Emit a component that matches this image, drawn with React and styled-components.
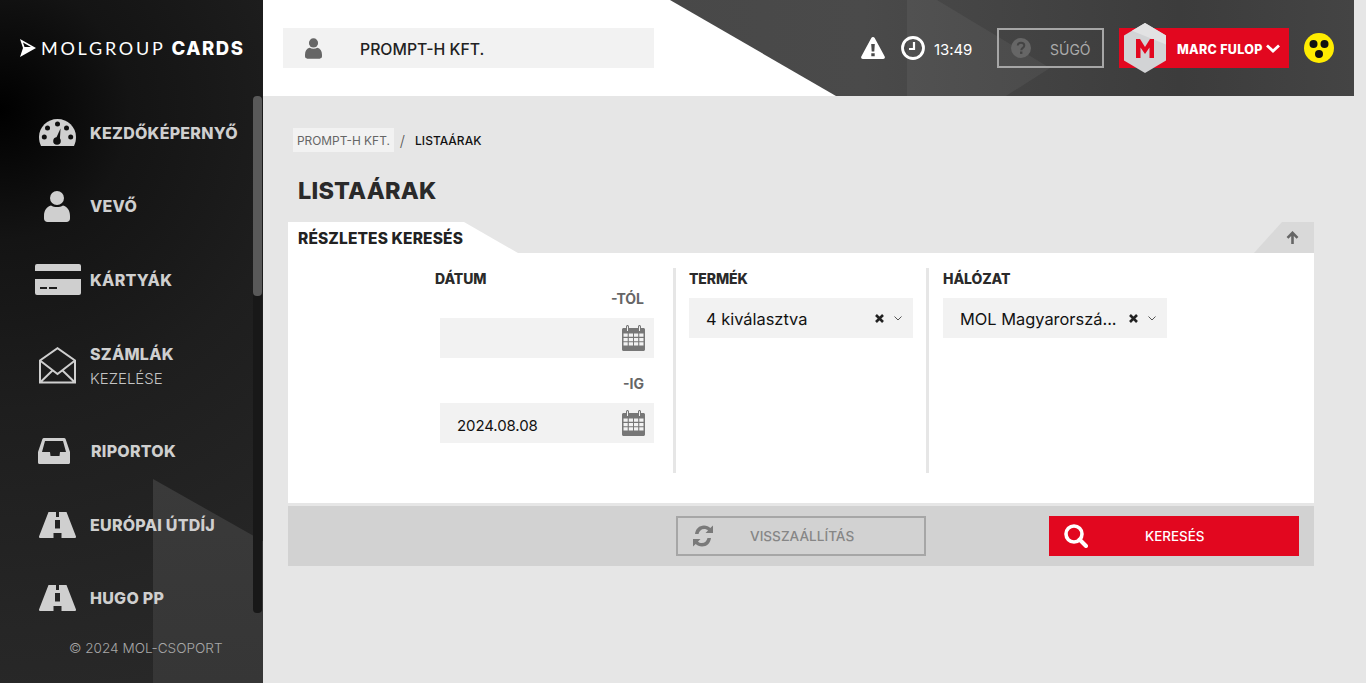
import React from 'react';
import styled, { createGlobalStyle } from 'styled-components';

const Global = createGlobalStyle`
  html, body { margin: 0; padding: 0; height: 100%; overflow: hidden; }
  body { font-family: "Inter", "Liberation Sans", sans-serif; background: #e6e6e6; }
  * { box-sizing: border-box; }
`;
const RED = '#e2071f';

const Page = styled.div`display: flex; width: 1366px; height: 683px; background: #e6e6e6;`;
const Sidebar = styled.aside`
  position: relative; width: 263px; height: 683px; flex: none; overflow: hidden;
  display: flex; flex-direction: column;
  background: radial-gradient(circle at 0 110px, #000 0, #141414 130px, #1e1e1e 300px, #262626 520px, #2b2b2b 700px);
  &::after {
    content: ''; position: absolute; left: 153px; top: 479px; width: 110px; height: 204px;
    background: linear-gradient(180deg, #3a3a3a, #363636);
    clip-path: polygon(0 0, 100% 30.5%, 100% 100%, 0 100%);
  }
`;
const Logo = styled.div`
  position: relative; z-index: 1; height: 96px; flex: none; padding-left: 20px;
  display: flex; align-items: center; color: #fff; gap: 5px;
  svg { flex: none; }
`;
const LogoText = styled.div`
  font-size: 18px; letter-spacing: 2.75px; font-weight: 400; white-space: nowrap; font-family: "Lato", sans-serif;
  b { font-weight: 800; margin-left: -1px; font-family: "Inter", sans-serif; font-size: 18.5px; letter-spacing: 1.6px; }
`;
const Track = styled.div`
  position: absolute; z-index: 2; left: 253px; top: 96px; width: 9px; height: 517px;
  background: #181818; border-radius: 0 0 4px 4px;
`;
const Thumb = styled.div`width: 9px; height: 200px; background: #595959; border-radius: 4px;`;
const Nav = styled.nav`position: relative; z-index: 1; display: flex; flex-direction: column;`;
const NavRow = styled.div`
  display: flex; align-items: center; height: ${p => p.$h || 73.5}px; color: #cfcfcf;
`;
const NavIcon = styled.div`width: 90px; flex: none; display: flex; justify-content: center; padding-left: ${p => p.$pl ?? 24}px;`;
const NavText = styled.div`
  font-size: 16px; font-weight: 800; letter-spacing: .25px; white-space: nowrap;
  padding-left: ${p => p.$pl || 0}px;
  small { display: block; font-weight: 300; font-size: 15px; letter-spacing: 0; margin-top: 5px; color: #c4c4c4; }
`;
const Copyright = styled.div`
  position: relative; z-index: 1; margin-top: 5px; padding-left: 69px; font-size: 13.6px; font-weight: 300; color: #a8a8a8; white-space: nowrap;
`;

const Main = styled.main`flex: 1; min-width: 0; display: flex; flex-direction: column;`;
const Header = styled.header`
  position: relative; height: 96px; flex: none; display: flex; align-items: center;
  background: linear-gradient(90deg, #fff 1091px, #e6e6e6 1091px); padding: 0 32px 0 20px;
`;
const HeaderDark = styled.div`
  position: absolute; inset: 0 12px 0 0;
  background: linear-gradient(90deg, #444 0%, #4a4a4a 55%, #3c3c3c 84%, #444 100%);
  clip-path: polygon(407px 0, 100% 0, 100% 100%, 573px 100%);
  &::after {
    content: ''; position: absolute; left: 644px; top: 0; width: 160px; height: 96px;
    background: rgba(255,255,255,.05);
    clip-path: polygon(0 0, 30px 0, 143px 68px, 99px 96px, 0 96px);
  }
`;
const Company = styled.div`
  position: relative; width: 371px; height: 40px; background: #f2f2f2; display: flex; align-items: center;
  padding-left: 22px; font-size: 15.8px; font-weight: 500; color: #222;
  span { margin-left: 38px; padding-top: 2px; }
`;
const HeaderRight = styled.div`position: relative; margin-left: auto; display: flex; align-items: center;`;
const Spacer = styled.div`width: ${p => p.$w || 0}px; height: ${p => p.$h || 0}px; flex: none;`;
const WarnSlot = styled.div`margin-left: 1px; margin-right: 16px; display: flex;`;
const Time = styled.div`color: #fff; font-size: 15px; font-weight: 400; margin-left: 9px; width: 38px; letter-spacing: -.1px; padding-top: 2px;`;
const Help = styled.div`
  width: 107px; height: 40px; border: 2px solid #a6a6a6; margin-left: 25px; display: flex; align-items: center;
  padding-left: 12px; color: #ababab; font-size: 14px; font-weight: 400;
  span { margin-left: 19px; padding-top: 2px; }
`;
const UserBox = styled.div`
  position: relative; width: 170px; height: 40px; background: ${RED}; margin-left: 15px; display: flex; align-items: center;
  padding-left: 58px; color: #fff; font-size: 12.5px; font-weight: 800; letter-spacing: .3px; white-space: nowrap;
  gap: 3px;
  span { padding-top: 2px; }
`;
const Hexa = styled.svg`position: absolute; left: 5px; top: -5px;`;
const Blind = styled.svg`margin-left: 15px; display: block;`;

const Content = styled.div`flex: 1; padding: 32px 52px 0 25px;`;
const Crumbs = styled.div`display: flex; align-items: center; height: 24px; margin-left: 5px; font-size: 12px; font-weight: 500;`;
const CrumbLink = styled.div`background: #f2f2f2; height: 24px; padding: 0 4px; display: flex; align-items: center; color: #666; font-size: 11.9px; font-weight: 400;`;
const CrumbSep = styled.span`color: #555; margin: 0 10px 0 6px; font-size: 15px; font-weight: 300;`;
const CrumbNow = styled.span`color: #111;`;
const Title = styled.h1`margin: 23px 0 16px 10px; height: 31px; line-height: 31px; font-size: 23.5px; font-weight: 800; color: #2a2a2a; letter-spacing: .2px;`;

const TabBar = styled.div`display: flex; justify-content: space-between; height: 31px;`;
const Tab = styled.div`
  width: 230px; height: 31px; background: #fff; clip-path: polygon(0 0, 176px 0, 100% 100%, 0 100%);
  padding: 7px 0 0 10px; font-size: 15.5px; line-height: 20px; font-weight: 800; color: #222; letter-spacing: .13px; white-space: nowrap;
`;
const Collapse = styled.div`
  width: 60px; height: 31px; background: #d9d9d9; clip-path: polygon(28px 0, 100% 0, 100% 100%, 0 100%);
  display: flex; align-items: center; justify-content: flex-end; padding-right: 15px; color: #666;
`;
const Body = styled.div`height: 250px; background: #fff; display: flex; padding: 15px 0 0 131px; align-items: flex-start;`;
const Column = styled.div`
  width: ${p => p.$w}px; height: 205px; flex: none;
  padding-left: ${p => p.$pl}px;
  border-left: ${p => p.$line ? '3px solid #e6e6e6' : 'none'};
`;
const FieldLabel = styled.div`height: 22px; line-height: 22px; font-size: 14px; font-weight: 800; color: #2a2a2a; letter-spacing: -.1px;`;
const SubLabel = styled.div`
  width: 209px; margin-top: -1px; text-align: right; font-size: 14px; line-height: 20px; font-weight: 700; color: #666; height: 20px;
`;
const DateInput = styled.div`
  width: 214px; height: 40px; margin-left: 5px; background: #f2f2f2; display: flex; align-items: center; justify-content: space-between;
  padding: 0 9px 0 17px; font-size: 15px; font-weight: 400; color: #111; letter-spacing: -.1px;
  span { padding-top: 4px; }
`;
const Select = styled.div`
  width: 224px; height: 40px; margin-top: 8px; background: #f2f2f2; display: flex; align-items: center;
  padding: 0 11px 0 17px; font-size: 16.4px; font-weight: 400; color: #111; white-space: nowrap;
  span { flex: 1; padding-top: 2px; }
  svg + svg { margin-left: 10px; }
`;
const Stripe = styled.div`height: 3px;`;
const Actions = styled.div`
  height: 60px; background: #d2d2d2; display: flex; align-items: center; padding-left: 388px;
`;
const Reset = styled.div`
  width: 250px; height: 40px; border: 2px solid #a6a6a6; display: flex; align-items: center; padding-left: 14px; color: #868686;
  font-size: 13.6px; font-weight: 500;
  span { margin-left: 36px; }
`;
const Search = styled.div`
  width: 250px; height: 40px; margin-left: 123px; background: ${RED}; display: flex; align-items: center; padding-left: 15px; color: #fff;
  font-size: 13.4px; font-weight: 500;
  span { margin-left: 57px; }
`;

const Gauge = () => (
  <svg width="37" height="27" viewBox="0 0 37 27">
    <path fill="#cfcfcf" d="M18.500 0C8.300 0 0 8 0 18c0 3.200.7 6.200 2 9h33c1.300-2.800 2-5.800 2-9C37 8 28.700 0 18.500 0Z"/>
    <g fill="#0f0f0f">
      <circle cx="18.500" cy="5" r="2.500"/><circle cx="8.500" cy="9" r="2.500"/><circle cx="27.500" cy="9" r="2.500"/>
      <circle cx="5.300" cy="18" r="2.500"/><circle cx="31.700" cy="18" r="2.500"/>
      <circle cx="18" cy="22" r="3.800"/><path d="M21.500 9.500 20.800 22h-5Z"/>
    </g>
  </svg>
);
const UserIcon = ({ w = 26, h = 31, c = '#cfcfcf' }) => (
  <svg width={w} height={h} viewBox="0 0 26 31"><circle cx="13" cy="7" r="7" fill={c}/><path fill={c} d="M0 25c0-6 3-9.500 7-10.500 3.500 2 8.500 2 12 0 4 1 7 4.500 7 10.500v2.500c0 2-1.500 3.500-3.500 3.500h-19C1.500 31 0 29.500 0 27.500Z"/></svg>
);
const Card = () => (
  <svg width="46" height="31" viewBox="0 0 46 31"><path fill="#cfcfcf" d="M2 0h42a2 2 0 0 1 2 2v5H0V2a2 2 0 0 1 2-2ZM0 15h46v14a2 2 0 0 1-2 2H2a2 2 0 0 1-2-2Z"/><path fill="#1d1d1d" d="M5 23h7v2H5zM14 23h8v2h-8z"/></svg>
);
const Envelope = () => (
  <svg width="37" height="37" viewBox="0 0 37 37" fill="none" stroke="#cfcfcf" strokeWidth="2"><path d="M1 35.500V13.500L18.500 1.200 36 13.500v22ZM1 35.500 14 23M36 35.500 23 23M1 13.500 18.500 27 36 13.500"/></svg>
);
const Inbox = () => (
  <svg width="32" height="26" viewBox="0 0 32 26"><path fill="#cfcfcf" fillRule="evenodd" d="M6 0h20c.8 0 1.300.4 1.600 1L32 14v10.500c0 .9-.6 1.500-1.500 1.500h-29C.6 26 0 25.400 0 24.500V14L4.400 1C4.700.4 5.200 0 6 0ZM7 3 4 14h8l.5 4h9l.5-4h6L25 3Z"/></svg>
);
const Road = () => (
  <svg width="37" height="26" viewBox="0 0 37 26"><path fill="#cfcfcf" fillRule="evenodd" d="M9.500 0H17v5h3V0h7.500l9.500 24.500c.2.900-.3 1.500-1 1.500H22.500v-5h-8v5H1c-.7 0-1.200-.6-1-1.500ZM16 8h5v8.500h-5Z"/></svg>
);
const Warn = () => (
  <svg width="24" height="22" viewBox="0 0 24 22"><path fill="#fff" fillRule="evenodd" d="M12 0c.8 0 1.300.4 1.700 1l10 18.500c.6 1.200-.2 2.500-1.500 2.500H1.800C.5 22-.3 20.700.3 19.500L10.300 1c.4-.6.9-1 1.700-1ZM10.200 7l.5 7.500h2.600l.5-7.500ZM10.300 16.200v3h3.400v-3Z"/></svg>
);
const Clock = () => (
  <svg width="24" height="24" viewBox="0 0 24 24" fill="none" stroke="#fff"><circle cx="12" cy="12" r="10.500" strokeWidth="2.800"/><path d="M13 6v7H8" strokeWidth="2.200"/></svg>
);
const Question = () => (
  <svg width="20" height="20" viewBox="0 0 20 20"><circle cx="10" cy="10" r="10" fill="#666"/><path d="M6.700 7.500c.2-1.800 1.600-2.700 3.300-2.700 1.900 0 3.300 1 3.300 2.700 0 2.500-3 2.300-3 4.700" fill="none" stroke="#444" strokeWidth="2"/><rect x="9" y="13.500" width="2.400" height="2.400" fill="#444"/></svg>
);
const Calendar = () => (
  <svg width="23" height="26" viewBox="0 0 23 26"><path fill="#777" fillRule="evenodd" d="M1.500 3H4V1.500C4 .5 5 0 5.500 0S7 .5 7 1.500V3h9V1.500C16 .5 17 0 17.500 0S19 .5 19 1.500V3h2.500c.8 0 1.500.7 1.500 1.500v20c0 .8-.7 1.500-1.500 1.500h-20C.7 26 0 25.300 0 24.500v-20C0 3.700.7 3 1.500 3ZM5 1.300V6h1V1.300ZM17 1.300V6h1V1.300Z"/><path fill="#f2f2f2" d="M1.500 8.500h4.200v3.300H1.500zM6.800 8.500h4.200v3.300H6.800zM12 8.500h4.200v3.300H12zM17.300 8.500h4.200v3.300h-4.200zM1.500 12.900h4.200v3.300H1.500zM6.800 12.900h4.200v3.300H6.800zM12 12.900h4.200v3.300H12zM17.300 12.900h4.200v3.300h-4.200zM1.500 17.300h4.200v3.300H1.500zM6.800 17.300h4.200v3.300H6.800zM12 17.300h4.200v3.300H12zM17.300 17.300h4.200v3.300h-4.200z"/></svg>
);
const Times = () => (
  <svg width="9" height="9" viewBox="0 0 9 9" stroke="#222" strokeWidth="2.600"><path d="M1 1l7 7M8 1 1 8"/></svg>
);
const Chevron = () => (
  <svg width="8" height="5" viewBox="0 0 8 5" fill="none" stroke="#555" strokeWidth="1"><path d="M.5.500 4 4 7.500.500"/></svg>
);
const Up = () => (
  <svg width="13" height="13" viewBox="0 0 13 13" fill="none" stroke="#666" strokeWidth="2.600"><path d="M1.500 6.800 6.500 1.800l5 5M6.500 2v11"/></svg>
);
const Refresh = () => (
  <svg width="22" height="24" viewBox="0 0 22 24"><path fill="#7a7a7a" d="M3 10C3.700 5 7 1.500 12 1.500c2.700 0 4.800 1 6.300 2.500L21 1.500V9h-7.500l2.500-2.500c-1-1-2.300-1.500-3.800-1.500-3 0-5 2-5.700 5ZM19 14c-.7 5-4 8.500-9 8.500-2.700 0-4.800-1-6.300-2.500L1 22.500V15h7.500L6 17.500C7 18.500 8.300 19 9.800 19c3 0 5-2 5.700-5Z"/></svg>
);
const Magnify = () => (
  <svg width="24" height="24" viewBox="0 0 24 24" fill="none" stroke="#fff"><circle cx="10" cy="10" r="8" strokeWidth="3.600"/><path d="M15.500 15.500 22 22" strokeWidth="4" strokeLinecap="round"/></svg>
);
const LogoMark = () => (
  <svg width="16" height="18" viewBox="0 0 16 18"><path fill="#fff" fillRule="evenodd" d="M0 0l16 9L0 18l3-9ZM3 3.500 4.500 8H11Z"/></svg>
);

export default function App() {
  return (
    <Page>
      <Global />
      <Sidebar>
        <Logo><LogoMark /><LogoText>MOLGROUP <b>CARDS</b></LogoText></Logo>
        <Track><Thumb /></Track>
        <Nav>
          <NavRow><NavIcon><Gauge /></NavIcon><NavText>KEZDŐKÉPERNYŐ</NavText></NavRow>
          <NavRow><NavIcon><UserIcon /></NavIcon><NavText>VEVŐ</NavText></NavRow>
          <NavRow><NavIcon $pl={26}><Card /></NavIcon><NavText>KÁRTYÁK</NavText></NavRow>
          <NavRow $h={98}><NavIcon><Envelope /></NavIcon><NavText>SZÁMLÁK<small>KEZELÉSE</small></NavText></NavRow>
          <NavRow><NavIcon $pl={18}><Inbox /></NavIcon><NavText $pl={1}>RIPORTOK</NavText></NavRow>
          <NavRow><NavIcon><Road /></NavIcon><NavText>EURÓPAI ÚTDÍJ</NavText></NavRow>
          <NavRow><NavIcon><Road /></NavIcon><NavText>HUGO PP</NavText></NavRow>
        </Nav>
        <Copyright>© 2024 MOL-CSOPORT</Copyright>
      </Sidebar>
      <Main>
        <Header>
          <HeaderDark />
          <Company><UserIcon w={17} h={21} c="#666" /><span>PROMPT-H KFT.</span></Company>
          <HeaderRight>
            <WarnSlot><Warn /></WarnSlot>
            <Clock />
            <Time>13:49</Time>
            <Help><Question /><span>SÚGÓ</span></Help>
            <UserBox>
              <Hexa width="42" height="50" viewBox="0 0 42 50">
                <path fill="#d2d3d5" d="M21 0l21 12.500v25L21 50 0 37.500v-25Z"/>
                <path fill="#e2e2e3" d="M21 0l21 12.500v9L8 7.700Z"/>
                <path fill={RED} d="M12 35V16h4l5 8 5-8h4v19h-4.500V24.500L21 31l-4.500-6.500V35Z"/>
              </Hexa>
              <span>MARC FULOP</span>
              <svg width="14" height="9" viewBox="0 0 14 9" fill="none" stroke="#fff" strokeWidth="2.800"><path d="M1 1.500 7 7l6-5.500"/></svg>
            </UserBox>
            <Blind width="30" height="30" viewBox="0 0 30 30">
              <circle cx="15" cy="15" r="15" fill="#ffec00"/>
              <circle cx="9.500" cy="11" r="4" fill="#111"/><circle cx="20.500" cy="11" r="4" fill="#111"/><circle cx="15" cy="21" r="4" fill="#111"/>
            </Blind>
          </HeaderRight>
        </Header>
        <Content>
          <Crumbs>
            <CrumbLink>PROMPT-H KFT.</CrumbLink>
            <CrumbSep>/</CrumbSep>
            <CrumbNow>LISTAÁRAK</CrumbNow>
          </Crumbs>
          <Title>LISTAÁRAK</Title>
          <TabBar>
            <Tab>RÉSZLETES KERESÉS</Tab>
            <Collapse><Up /></Collapse>
          </TabBar>
          <Body>
            <Column $w={254} $pl={16}>
              <FieldLabel>DÁTUM</FieldLabel>
              <SubLabel>-TÓL</SubLabel>
              <Spacer $h={9} />
              <DateInput><span /><Calendar /></DateInput>
              <Spacer $h={17} />
              <SubLabel>-IG</SubLabel>
              <Spacer $h={9} />
              <DateInput><span>2024.08.08</span><Calendar /></DateInput>
            </Column>
            <Column $w={253} $pl={13} $line>
              <FieldLabel>TERMÉK</FieldLabel>
              <Select><span>4 kiválasztva</span><Times /><Chevron /></Select>
            </Column>
            <Column $w={254} $pl={14} $line>
              <FieldLabel>HÁLÓZAT</FieldLabel>
              <Select><span>MOL Magyarorszá...</span><Times /><Chevron /></Select>
            </Column>
          </Body>
          <Stripe />
          <Actions>
            <Reset><Refresh /><span>VISSZAÁLLÍTÁS</span></Reset>
            <Search><Magnify /><span>KERESÉS</span></Search>
          </Actions>
        </Content>
      </Main>
    </Page>
  );
}
